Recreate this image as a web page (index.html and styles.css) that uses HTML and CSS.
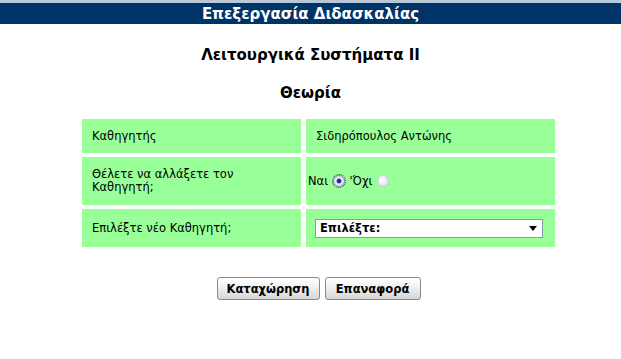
FILE: index.html
```html
<!DOCTYPE html>
<html lang="el">
<head>
<meta charset="utf-8">
<title>Επεξεργασία Διδασκαλίας</title>
<link rel="stylesheet" href="styles.css">
</head>
<body>
<div class="topline"></div>
<div class="header">Επεξεργασία Διδασκαλίας</div>
<h1 class="course">Λειτουργικά Συστήματα II</h1>
<h2 class="kind">Θεωρία</h2>
<div class="wrap">
  <table class="form">
    <tr class="r1">
      <td class="lbl">Καθηγητής</td>
      <td class="val">Σιδηρόπουλος Αντώνης</td>
    </tr>
    <tr class="r2">
      <td class="lbl">Θέλετε να αλλάξετε τον<br>Καθηγητή;</td>
      <td class="val radios">Ναι <input type="radio" name="ch" class="rad" checked> 'Όχι <input type="radio" name="ch" class="rad"></td>
    </tr>
    <tr class="r3">
      <td class="lbl">Επιλέξτε νέο Καθηγητή;</td>
      <td class="val sel">
        <div class="select"><span>Επιλέξτε:</span><span class="arrow"></span></div>
      </td>
    </tr>
  </table>
  <div class="buttons">
    <button class="btn b1">Καταχώρηση</button>
    <button class="btn b2">Επαναφορά</button>
  </div>
</div>
</body>
</html>
```

FILE: styles.css
```css
html, body {
  margin: 0;
  padding: 0;
  background: #ffffff;
  font-family: "DejaVu Sans", Verdana, sans-serif;
  color: #000;
}
.topline {
  height: 3px;
  background: #b9c8d8;
}
.header {
  height: 21px;
  background: #003366;
  color: #ffffff;
  font-family: "DejaVu Sans", sans-serif;
  font-weight: bold;
  font-size: 15px;
  line-height: 22px;
  text-align: center;
}
.course {
  margin: 0;
  padding-top: 20px;
  height: 22px;
  line-height: 22px;
  font-size: 15px;
  font-weight: bold;
  text-align: center;
}
.kind {
  margin: 0;
  padding-top: 16px;
  height: 22px;
  line-height: 22px;
  font-size: 15px;
  font-weight: bold;
  text-align: center;
}
.wrap {
  padding-left: 16px;
  padding-top: 11px;
}
.form {
  border-collapse: separate;
  border-spacing: 5px 4px;
  margin: 0 auto;
  font-size: 11.5px;
}
.form td {
  background: #99ff99;
  padding: 0 0 0 10px;
  vertical-align: middle;
  line-height: 13px;
}
.lbl { width: 209px; }
.val { width: 239px; }
.r1 td { height: 34px; }
.r2 td { height: 48px; }
.r3 td { height: 38px; }
.form td.radios { padding-left: 2px; }
.rad {
  appearance: none;
  -webkit-appearance: none;
  width: 12px;
  height: 12px;
  margin: 0 1px;
  border-radius: 50%;
  border: 1px solid #c8c8e0;
  background: radial-gradient(circle at 40% 40%, #ffffff 0%, #e4e4f2 70%, #d4d4ea 100%);
  vertical-align: -2px;
}
.rad:checked {
  border-color: #8c8cb8;
  background: radial-gradient(circle, #1a1a7a 0%, #3c3ca8 30%, #e8e8f6 40%, #d8d8ee 100%);
  outline: 1px dotted #333;
  outline-offset: 0;
}
.form td.sel { padding-left: 9px; }
.select {
  height: 17px;
  border: 1px solid #7f9db9;
  background: #fff;
  display: flex;
  align-items: center;
  justify-content: space-between;
  font-size: 11.5px;
  font-weight: bold;
  padding-left: 4px;
  box-sizing: content-box;
  width: 222px;
}
.arrow {
  width: 0;
  height: 0;
  border-left: 4px solid transparent;
  border-right: 4px solid transparent;
  border-top: 5px solid #000;
  margin-right: 5px;
}
.buttons {
  display: flex;
  justify-content: center;
  gap: 5px;
  padding-top: 26px;
}
.btn {
  height: 23px;
  border: 1px solid #8a8a8a;
  border-radius: 3px;
  background: linear-gradient(#ffffff 0%, #f2f2f2 40%, #d6d6d6 100%);
  font-family: "DejaVu Sans", sans-serif;
  font-size: 11.5px;
  font-weight: bold;
  color: #000;
  padding: 0;
}
.b1 { width: 103px; }
.b2 { width: 96px; }
```
